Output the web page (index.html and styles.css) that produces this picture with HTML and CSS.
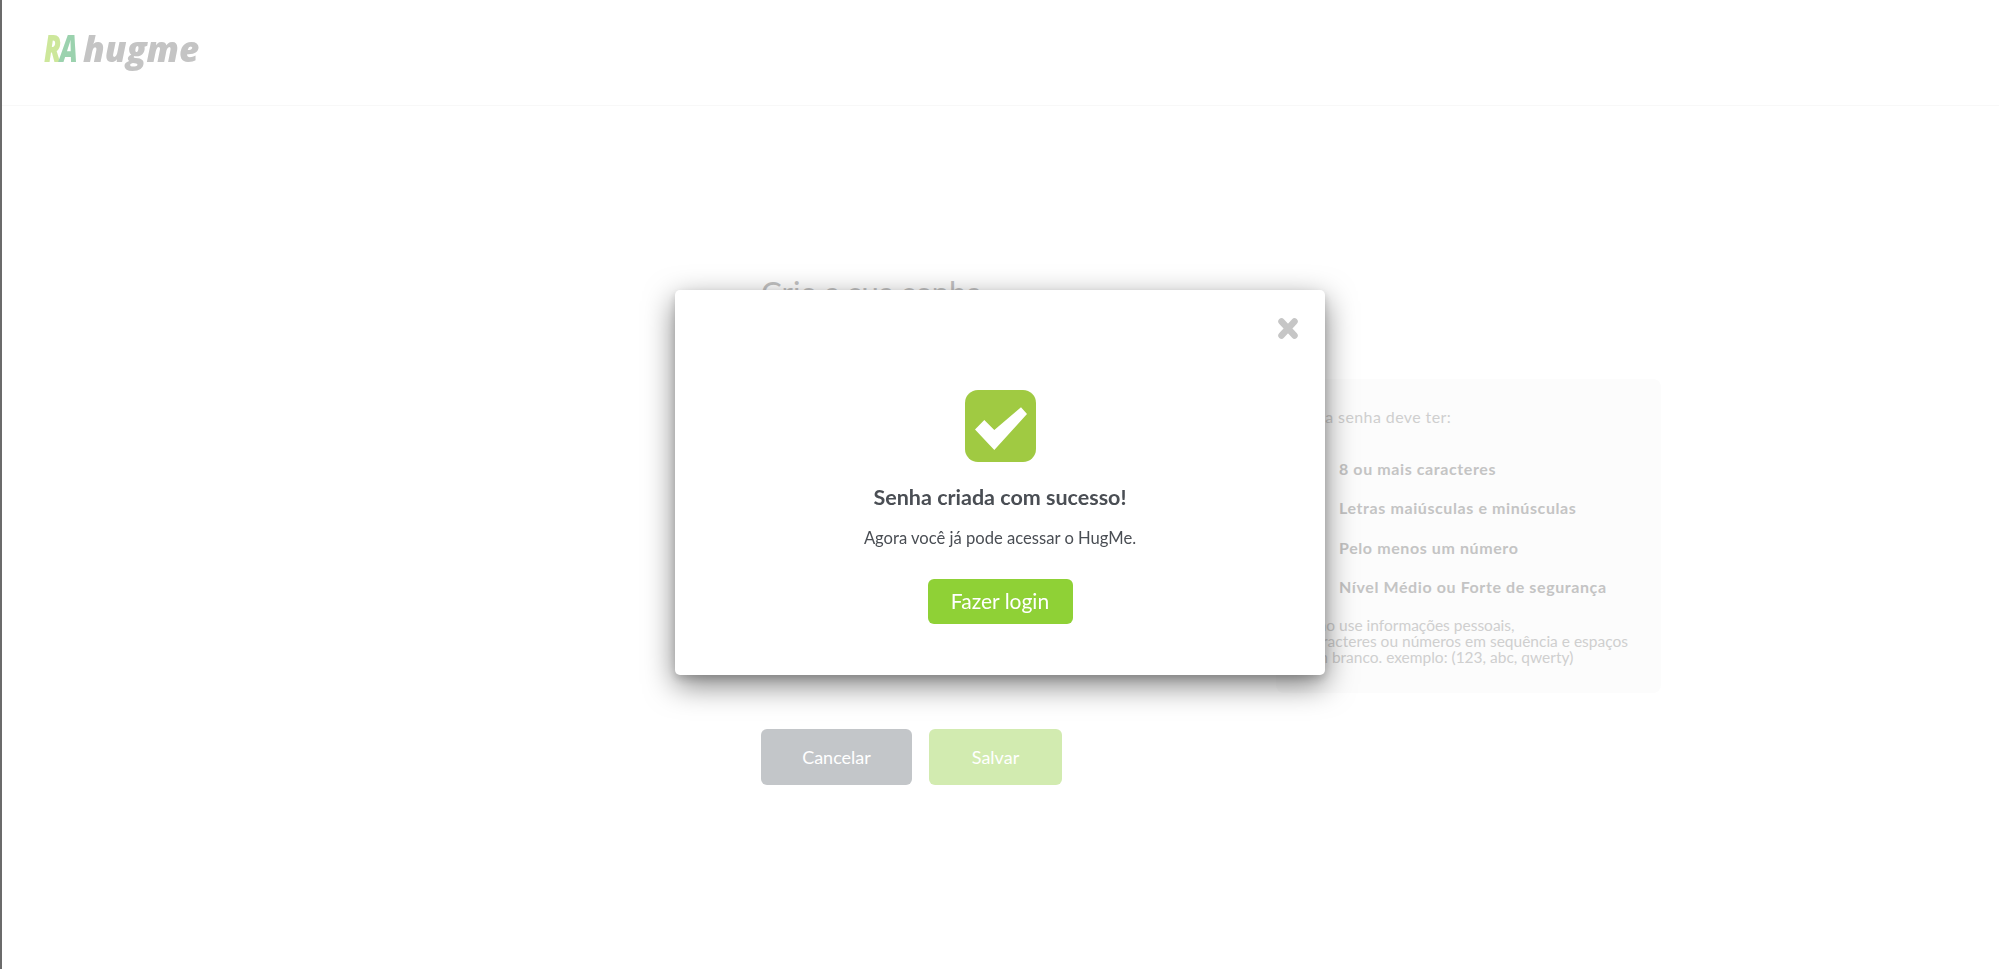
FILE: index.html
```html
<!doctype html>
<html lang="pt-BR">
  <head>
    <meta charset="utf-8">
    <title>Crie a sua senha</title>
    <link rel="stylesheet" href="styles.css">
  </head>
  <body>
    <header class="topbar">
      <a class="logo" href="#"><span class="logo-mark"><span class="logo-r">R</span><span class="logo-a">A</span></span><span class="logo-name">hugme</span></a>
    </header>

    <main class="content">
      <h1 class="page-title">Crie a sua senha</h1>
      <div class="columns">
        <form class="fields"></form>
        <aside class="rules">
          <p class="rules-title">Sua senha deve ter:</p>
          <ul class="rules-list">
            <li>8 ou mais caracteres</li>
            <li>Letras maiúsculas e minúsculas</li>
            <li>Pelo menos um número</li>
            <li>Nível Médio ou Forte de segurança</li>
          </ul>
          <p class="rules-note">Não use informações pessoais,<br>caracteres ou números em sequência e espaços<br>em branco. exemplo: (123, abc, qwerty)</p>
        </aside>
      </div>
      <div class="actions">
        <button type="button" class="btn btn-cancel">Cancelar</button>
        <button type="button" class="btn btn-save">Salvar</button>
      </div>
    </main>

    <div class="modal">
      <button type="button" class="modal-close" aria-label="Fechar">
        <svg width="20" height="21" viewBox="0 0 20 21"><path d="M3.5 3.5 16.5 17.5M16.5 3.5 3.5 17.5" stroke="#c6c6c6" stroke-width="6.5" stroke-linecap="round"/></svg>
      </button>
      <svg class="modal-icon" width="71" height="72" viewBox="0 0 71 72">
        <rect width="71" height="72" rx="13" fill="#a0ca42"/>
        <path d="M10 39.5 19.3 30 29.3 40 56 17.3 62 24 29.3 60Z" fill="#fff"/>
      </svg>
      <h2 class="modal-title">Senha criada com sucesso!</h2>
      <p class="modal-text">Agora você já pode acessar o HugMe.</p>
      <button type="button" class="btn-login">Fazer login</button>
    </div>
  </body>
</html>
```

FILE: styles.css
```css
body {
  margin: 0;
  height: 969px;
  overflow: hidden;
  background-color: #fff;
  border-left: 2px solid #6b6b6b;
  box-sizing: border-box;
  font-family: Lato, "Liberation Sans", sans-serif;
}
.topbar {
  height: 106px;
  border-bottom: 1px solid #f8f8f8;
  display: flex;
  align-items: center;
  padding-left: 42px;
  box-sizing: border-box;
}
.logo {
  display: flex;
  align-items: baseline;
  text-decoration: none;
  font-family: "Open Sans", sans-serif;
  font-style: italic;
  font-weight: 800;
  margin-top: -10px;
  filter: blur(0.7px);
}
.logo-mark {
  width: 33px;
  font-size: 37px;
  letter-spacing: -2px;
  white-space: nowrap;
  transform: scaleX(0.72);
  transform-origin: left;
}
.logo-r {
  color: #cde79b;
}
.logo-a {
  color: #9bd2ae;
}
.logo-name {
  color: #c4c4c4;
  font-size: 35px;
  margin-left: 6px;
  letter-spacing: 0;
}
.content {
  width: 900px;
  margin-left: 759px;
  padding-top: 168px;
}
.page-title {
  margin: 0;
  font-size: 31px;
  font-weight: 400;
  line-height: 36px;
  color: #c2c2c2;
}
.columns {
  display: flex;
  height: 314px;
  margin-top: 69px;
}
.fields {
  width: 515px;
}
.rules {
  flex: 1;
  background-color: #fcfcfc;
  border-radius: 8px;
  padding: 28px 0 0 31px;
  color: #cfcfcf;
}
.rules-title {
  margin: 0;
  font-size: 16px;
  line-height: 20px;
  letter-spacing: 0.4px;
}
.rules-list {
  list-style: none;
  margin: 22px 0 0;
  padding: 0 0 0 32px;
  color: #c4c4c4;
  font-size: 16px;
  font-weight: 700;
  letter-spacing: 0.6px;
}
.rules-list li {
  height: 39.3px;
  line-height: 39px;
}
.rules-note {
  margin: 11px 0 0;
  font-size: 15.5px;
  line-height: 16px;
}
.actions {
  display: flex;
  gap: 17px;
  margin-top: 36px;
}
.btn {
  height: 56px;
  border: none;
  border-radius: 6px;
  color: #fff;
  font-family: inherit;
  font-size: 18px;
}
.btn-cancel {
  width: 151px;
  background-color: #c3c6c9;
}
.btn-save {
  width: 133px;
  background-color: #d2ebb0;
}
.modal {
  position: fixed;
  left: 675px;
  top: 290px;
  width: 650px;
  height: 385px;
  box-sizing: border-box;
  background-color: #fff;
  border-radius: 5px;
  box-shadow: 0 10px 30px rgba(0, 0, 0, 0.5), 0 4px 8px rgba(0, 0, 0, 0.15);
  display: flex;
  flex-direction: column;
  align-items: center;
  padding-top: 100px;
}
.modal-close {
  position: absolute;
  top: 28px;
  right: 27px;
  padding: 0;
  border: none;
  background: none;
  line-height: 0;
}
.modal-title {
  margin: 22px 0 0;
  font-size: 21.5px;
  line-height: 26px;
  color: #4a4e54;
}
.modal-text {
  margin: 17px 0 0;
  font-size: 16.6px;
  line-height: 22px;
  color: #4a4e54;
}
.btn-login {
  width: 145px;
  height: 45px;
  margin-top: 30px;
  padding-bottom: 4px;
  border: none;
  border-radius: 6px;
  background-color: #8fd136;
  color: #fff;
  font-family: inherit;
  font-size: 21px;
}
```
